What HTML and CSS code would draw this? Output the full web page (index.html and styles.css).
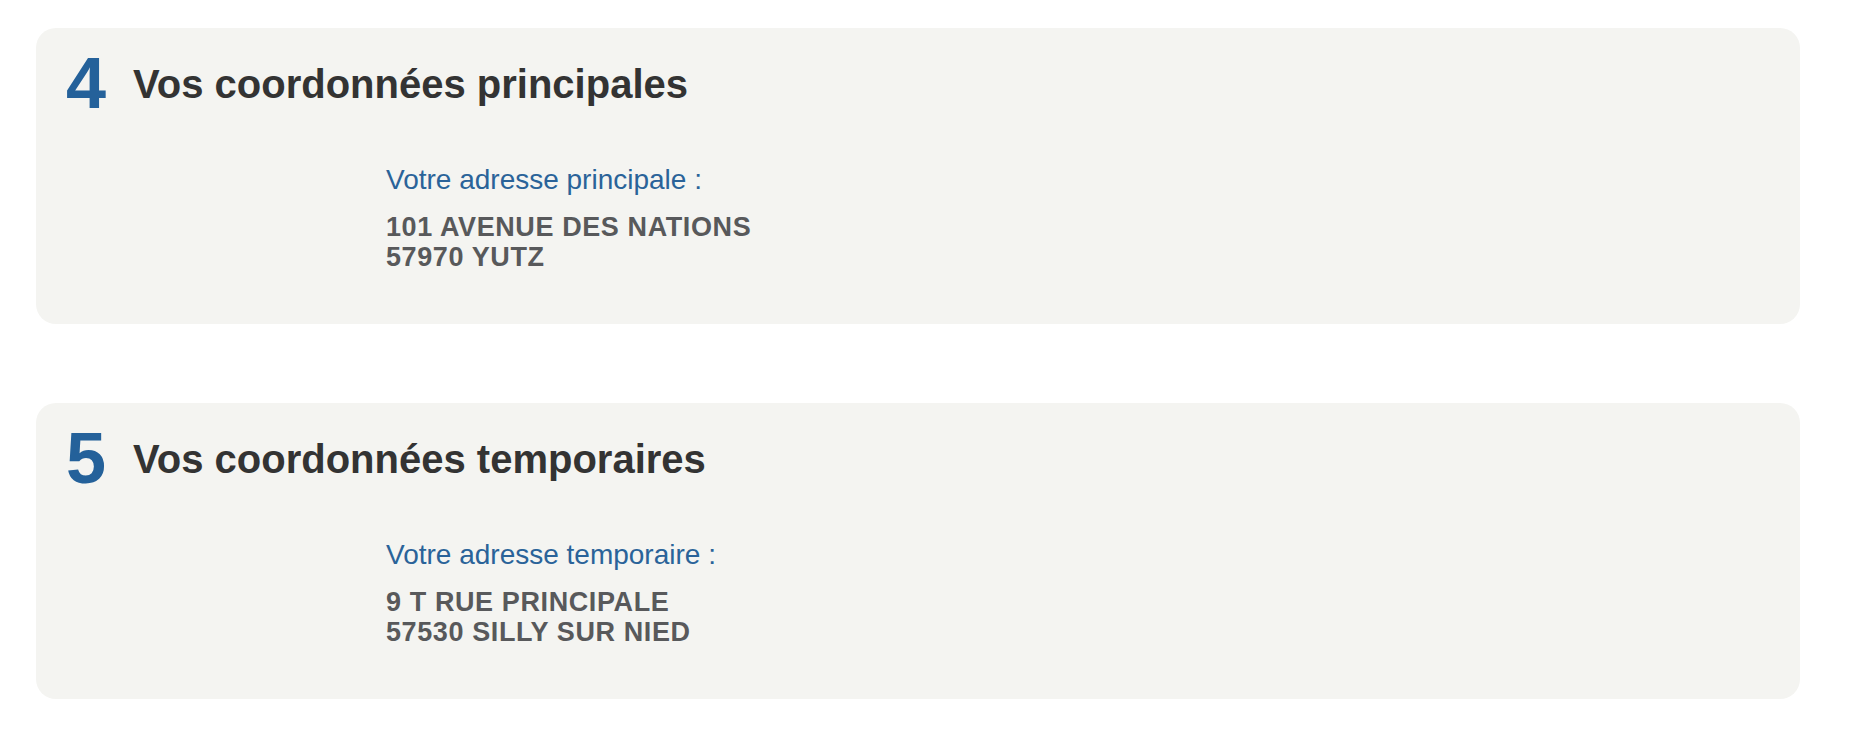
FILE: index.html
```html
<!DOCTYPE html>
<html lang="fr">
<head>
<meta charset="utf-8">
<title>Vos coordonnées</title>
<link rel="stylesheet" href="styles.css">
</head>
<body>
<main class="page">
  <section class="card">
    <header class="card-head">
      <span class="step">4</span>
      <h2 class="card-title">Vos coordonnées principales</h2>
    </header>
    <div class="card-body">
      <p class="label">Votre adresse principale :</p>
      <p class="address">101 AVENUE DES NATIONS<br>57970 YUTZ</p>
    </div>
  </section>
  <section class="card">
    <header class="card-head">
      <span class="step">5</span>
      <h2 class="card-title">Vos coordonnées temporaires</h2>
    </header>
    <div class="card-body">
      <p class="label">Votre adresse temporaire :</p>
      <p class="address">9 T RUE PRINCIPALE<br>57530 SILLY SUR NIED</p>
    </div>
  </section>
</main>
</body>
</html>
```

FILE: styles.css
```css
html, body {
  margin: 0;
  padding: 0;
  background: #ffffff;
}

body {
  font-family: "Liberation Sans", Arial, Helvetica, sans-serif;
}

.page {
  display: flex;
  flex-direction: column;
  gap: 79px;
  padding: 28px 0 0 36px;
  width: 1764px;
}

.card {
  background: #f4f4f1;
  border-radius: 20px;
  padding: 19px 30px 52px 30px;
}

.card-head {
  display: flex;
  align-items: center;
  gap: 27px;
}

.step {
  font-size: 72px;
  line-height: 72px;
  font-weight: 700;
  color: #24619a;
}

.card-title {
  margin: 2px 0 0 0;
  font-size: 40px;
  line-height: 48px;
  font-weight: 700;
  color: #333333;
}

.card-body {
  margin: 45px 0 0 320px;
}

.label {
  margin: 0;
  font-size: 28px;
  line-height: 32px;
  color: #2a6399;
}

.address {
  margin: 16px 0 0 0;
  font-size: 27px;
  line-height: 30px;
  font-weight: 700;
  color: #58595b;
  letter-spacing: 0.6px;
}
```
